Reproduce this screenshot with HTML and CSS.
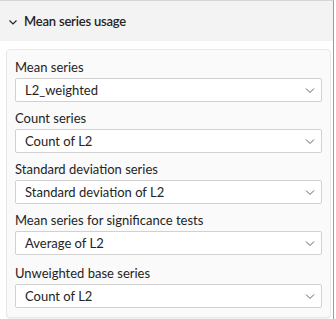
FILE: index.html
```html
<!DOCTYPE html>
<html lang="en">
<head>
    <meta charset="UTF-8">
    <meta name="viewport" content="width=device-width, initial-scale=1.0">
    <title>Mean series usage</title>
    <link rel="stylesheet" href="styles.css">
</head>
<body>

<div id="panel">
    <div class="section-header">
        <svg class="chevron" width="10" height="10" viewBox="0 0 10 10">
            <path d="M1.5 3.5 L5 7 L8.5 3.5" fill="none" stroke="#242424" stroke-width="1.2"/>
        </svg>
        <span>Mean series usage</span>
    </div>

    <div class="card">
        <div class="field">
            <label>Mean series</label>
            <div class="dropdown">
                <span>L2_weighted</span>
                <svg class="arrow" width="10" height="10" viewBox="0 0 10 10"><path d="M1 3.5 L5 7.5 L9 3.5" fill="none" stroke="#616161" stroke-width="1"/></svg>
            </div>
        </div>
        <div class="field">
            <label>Count series</label>
            <div class="dropdown">
                <span>Count of L2</span>
                <svg class="arrow" width="10" height="10" viewBox="0 0 10 10"><path d="M1 3.5 L5 7.5 L9 3.5" fill="none" stroke="#616161" stroke-width="1"/></svg>
            </div>
        </div>
        <div class="field">
            <label>Standard deviation series</label>
            <div class="dropdown">
                <span>Standard deviation of L2</span>
                <svg class="arrow" width="10" height="10" viewBox="0 0 10 10"><path d="M1 3.5 L5 7.5 L9 3.5" fill="none" stroke="#616161" stroke-width="1"/></svg>
            </div>
        </div>
        <div class="field">
            <label>Mean series for significance tests</label>
            <div class="dropdown">
                <span>Average of L2</span>
                <svg class="arrow" width="10" height="10" viewBox="0 0 10 10"><path d="M1 3.5 L5 7.5 L9 3.5" fill="none" stroke="#616161" stroke-width="1"/></svg>
            </div>
        </div>
        <div class="field">
            <label>Unweighted base series</label>
            <div class="dropdown">
                <span>Count of L2</span>
                <svg class="arrow" width="10" height="10" viewBox="0 0 10 10"><path d="M1 3.5 L5 7.5 L9 3.5" fill="none" stroke="#616161" stroke-width="1"/></svg>
            </div>
        </div>
    </div>
</div>

</body>
</html>
```

FILE: styles.css
```css
body {
    margin: 0;
    font-family: Lato, "Noto Sans", sans-serif;
    color: #242424;
    background: #ffffff;
}

#panel {
    width: 334px;
    height: 319px;
    border-right: 1px solid #9a9a9a;
    border-top: 1px solid #d6d6d6;
    box-sizing: border-box;
}

.section-header {
    display: flex;
    align-items: center;
    gap: 6px;
    height: 40px;
    padding-left: 8px;
    background-color: #f3f3f3;
    font-size: 13px;
    font-weight: 600;
    letter-spacing: -0.2px;
}

.chevron {
    margin-top: 1px;
}

.card {
    margin: 8px 2px 0 6px;
    padding: 8px 8px 9px 8px;
    background-color: #fafafa;
    border: 1px solid #e8e8e8;
    border-radius: 4px;
    box-shadow: 0 1px 1px rgba(0, 0, 0, 0.06);
    display: flex;
    flex-direction: column;
    gap: 7px;
}

.field {
    display: flex;
    flex-direction: column;
    gap: 2px;
}

.field:last-child {
    margin-top: 2px;
}

.field label {
    font-size: 13px;
    line-height: 18px;
}

.dropdown {
    display: flex;
    align-items: center;
    justify-content: space-between;
    height: 24px;
    padding: 0 6px 0 9px;
    background-color: white;
    border: 1px solid #d1d1d1;
    border-radius: 2px;
    box-sizing: border-box;
    font-size: 13px;
}

.arrow {
    flex-shrink: 0;
}
```
